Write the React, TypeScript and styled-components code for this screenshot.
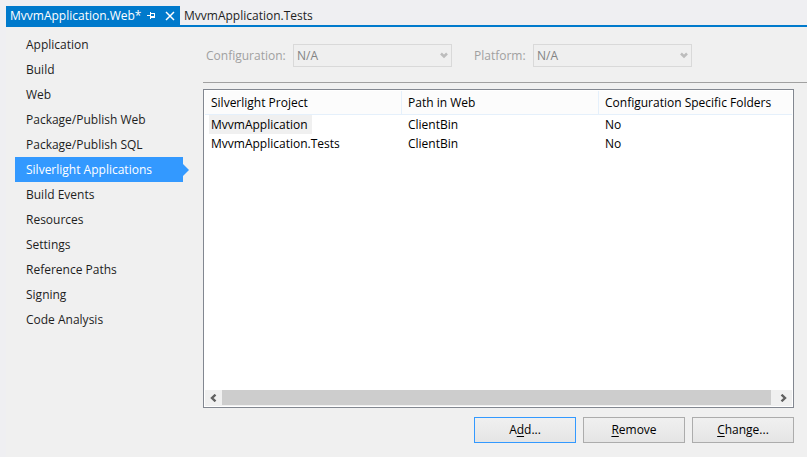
import React from "react";
import styled, { createGlobalStyle } from "styled-components";

const GlobalStyle = createGlobalStyle`
  *, *::before, *::after { box-sizing: border-box; }
  body {
    margin: 0;
    background: #efeff2;
    color: #1e1e1e;
    font: 12px/16px "Open Sans", "Noto Sans", sans-serif;
  }
  button, select { font: inherit; color: inherit; }
`;

const Window = styled.div`
  display: flex;
  flex-direction: column;
  min-height: 100vh;
  padding: 6px 0 0 6px;
`;

const TabStrip = styled.div`
  display: flex;
  height: 21px;
  border-bottom: 2px solid #007acc;
`;

const ActiveTab = styled.div`
  display: flex;
  align-items: center;
  gap: 9px;
  width: 174px;
  padding: 0 5px 0 4px;
  background: #007acc;
  color: #ffffff;
`;

const TabLabel = styled.button`
  flex: 1;
  min-width: 0;
  padding: 0;
  border: 0;
  background: none;
  line-height: 19px;
  text-align: left;
  white-space: nowrap;
`;

const IdleTab = styled(TabLabel)`
  flex: none;
  padding: 0 4px;
`;

const TabIcon = styled.button`
  display: flex;
  flex: none;
  padding: 0;
  border: 0;
  background: none;
`;

const Body = styled.div`
  display: flex;
  flex: 1;
  background: #f0f0f0;
`;

const Nav = styled.nav`
  flex: none;
  width: 197px;
  padding: 5px 20px 0 9px;
`;

const NavLink = styled.a<{ $active?: boolean }>`
  position: relative;
  display: block;
  height: 25px;
  padding: 0 11px;
  line-height: 25px;
  color: ${(p) => (p.$active ? "#ffffff" : "#1e1e1e")};
  background: ${(p) => (p.$active ? "#3399ff" : "transparent")};
  text-decoration: none;
  white-space: nowrap;

  &::after {
    content: "";
    display: ${(p) => (p.$active ? "block" : "none")};
    position: absolute;
    left: 100%;
    top: 7px;
    border: 6px solid transparent;
    border-left-color: #3399ff;
    border-right-width: 0;
  }
`;

const Main = styled.main`
  display: flex;
  flex: 1;
  flex-direction: column;
  min-width: 0;
`;

const FilterBar = styled.div`
  display: flex;
  gap: 22px;
  padding: 17px 0 15px 3px;
`;

const Field = styled.div`
  display: flex;
  align-items: center;
`;

const FieldLabel = styled.label<{ $width: number }>`
  width: ${(p) => p.$width}px;
  color: #a0a0a0;
  white-space: nowrap;
`;

const SelectFrame = styled.div`
  display: grid;
  align-items: center;
  width: 159px;

  > * { grid-area: 1 / 1; }
  > svg { justify-self: end; margin-right: 4px; pointer-events: none; }
`;

const Select = styled.select`
  appearance: none;
  width: 100%;
  height: 23px;
  padding: 0 3px;
  border: 1px solid #d9d9d9;
  border-radius: 0;
  background: #efefef;
  color: #838383;
  opacity: 1;
`;

const Divider = styled.hr`
  width: 100%;
  height: 1px;
  margin: 0 0 6px;
  border: 0;
  background: #a0a0a0;
`;

const ListBox = styled.section`
  display: flex;
  flex: 1;
  flex-direction: column;
  margin-right: 13px;
  padding: 1px;
  border: 1px solid #828790;
  background: #ffffff;
`;

const Table = styled.table`
  width: 100%;
  table-layout: fixed;
  border-collapse: separate;
  border-spacing: 0;
  color: #000000;
`;

const Th = styled.th<{ $width?: number }>`
  width: ${(p) => (p.$width ? `${p.$width}px` : "auto")};
  height: 24px;
  padding: 0 6px;
  border-bottom: 1px solid #e5f0fb;
  background: #fcfcfc;
  font-weight: 400;
  text-align: left;
  white-space: nowrap;

  & + & { border-left: 1px solid #e5f0fb; }
`;

const Td = styled.td`
  height: 19px;
  padding: 0 7px;
  white-space: nowrap;

  &:first-child { padding: 0 4px; }
`;

const ItemName = styled.span<{ $selected: boolean }>`
  display: inline-block;
  padding: 0 4px 0 2px;
  line-height: 19px;
  background: ${(p) => (p.$selected ? "#f0f0f0" : "transparent")};
`;

const ScrollBar = styled.div`
  display: flex;
  height: 16px;
  margin-top: auto;
  padding-bottom: 1px;
  background: #f0f0f0;
`;

const ScrollArrow = styled.button`
  display: flex;
  align-items: center;
  justify-content: center;
  width: 17px;
  padding: 0;
  border: 0;
  background: none;
`;

const ScrollThumb = styled.div`
  flex: 1;
  margin-right: 4px;
  background: #cdcdcd;
`;

const Actions = styled.div`
  display: flex;
  justify-content: flex-end;
  gap: 7px;
  padding: 9px 13px 14px 0;
`;

const ActionButton = styled.button<{ $primary?: boolean }>`
  width: 102px;
  height: 26px;
  padding: 0;
  border: 1px solid ${(p) => (p.$primary ? "#3399ff" : "#acacac")};
  background: linear-gradient(#f0f0f0, #e5e5e5);
  color: #000000;
`;

const Mnemonic = styled.u`
  text-underline-offset: 2px;
`;

const navItems = [
  "Application", "Build", "Web", "Package/Publish Web", "Package/Publish SQL",
  "Silverlight Applications", "Build Events", "Resources", "Settings",
  "Reference Paths", "Signing", "Code Analysis",
];

const projects = [
  { name: "MvvmApplication", path: "ClientBin", specific: "No" },
  { name: "MvvmApplication.Tests", path: "ClientBin", specific: "No" },
];

const PinIcon = () => (
  <svg width="9" height="9" viewBox="0 0 9 9" fill="none" stroke="currentColor" shapeRendering="crispEdges">
    <path d="M0 4.5H3M3.5 1V8M4 2.5H8M7.5 2V7M4 5.5H8M4 6.5H8" />
  </svg>
);

const CloseIcon = () => (
  <svg width="10" height="10" viewBox="0 0 10 10" fill="none" stroke="currentColor" strokeWidth="1.5">
    <path d="M1 1L9 9M9 1L1 9" />
  </svg>
);

const DownIcon = () => (
  <svg width="8" height="7" viewBox="0 0 8 7" fill="none" stroke="#bcbcbc" strokeWidth="2.5">
    <path d="M1 1.5L4 4.5L7 1.5" />
  </svg>
);

const ArrowIcon = ({ d }: { d: string }) => (
  <svg width="7" height="8" viewBox="0 0 7 8" fill="none" stroke="#606060" strokeWidth="2.4">
    <path d={d} />
  </svg>
);

function Picker({ id, label, labelWidth }: { id: string; label: string; labelWidth: number }) {
  return (
    <Field>
      <FieldLabel htmlFor={id} $width={labelWidth}>{label}</FieldLabel>
      <SelectFrame>
        <Select id={id} disabled defaultValue="N/A">
          <option>N/A</option>
        </Select>
        <DownIcon />
      </SelectFrame>
    </Field>
  );
}

export default function App() {
  return (
    <>
      <GlobalStyle />
      <Window>
        <TabStrip>
          <ActiveTab>
            <TabLabel>MvvmApplication.Web*</TabLabel>
            <TabIcon aria-label="Pin tab"><PinIcon /></TabIcon>
            <TabIcon aria-label="Close tab"><CloseIcon /></TabIcon>
          </ActiveTab>
          <IdleTab>MvvmApplication.Tests</IdleTab>
        </TabStrip>
        <Body>
          <Nav>
            {navItems.map((item) => (
              <NavLink key={item} href="#" $active={item === "Silverlight Applications"}>{item}</NavLink>
            ))}
          </Nav>
          <Main>
            <FilterBar>
              <Picker id="configuration" label="Configuration:" labelWidth={87} />
              <Picker id="platform" label="Platform:" labelWidth={59} />
            </FilterBar>
            <Divider />
            <ListBox>
              <Table>
                <thead>
                  <tr>
                    <Th $width={196}>Silverlight Project</Th>
                    <Th $width={197}>Path in Web</Th>
                    <Th>Configuration Specific Folders</Th>
                  </tr>
                </thead>
                <tbody>
                  {projects.map((project, index) => (
                    <tr key={project.name}>
                      <Td><ItemName $selected={index === 0}>{project.name}</ItemName></Td>
                      <Td>{project.path}</Td>
                      <Td>{project.specific}</Td>
                    </tr>
                  ))}
                </tbody>
              </Table>
              <ScrollBar>
                <ScrollArrow aria-label="Scroll left"><ArrowIcon d="M5.5 0.7L2 4L5.5 7.3" /></ScrollArrow>
                <ScrollThumb />
                <ScrollArrow aria-label="Scroll right"><ArrowIcon d="M1.5 0.7L5 4L1.5 7.3" /></ScrollArrow>
              </ScrollBar>
            </ListBox>
            <Actions>
              <ActionButton $primary>A<Mnemonic>d</Mnemonic>d...</ActionButton>
              <ActionButton><Mnemonic>R</Mnemonic>emove</ActionButton>
              <ActionButton><Mnemonic>C</Mnemonic>hange...</ActionButton>
            </Actions>
          </Main>
        </Body>
      </Window>
    </>
  );
}
